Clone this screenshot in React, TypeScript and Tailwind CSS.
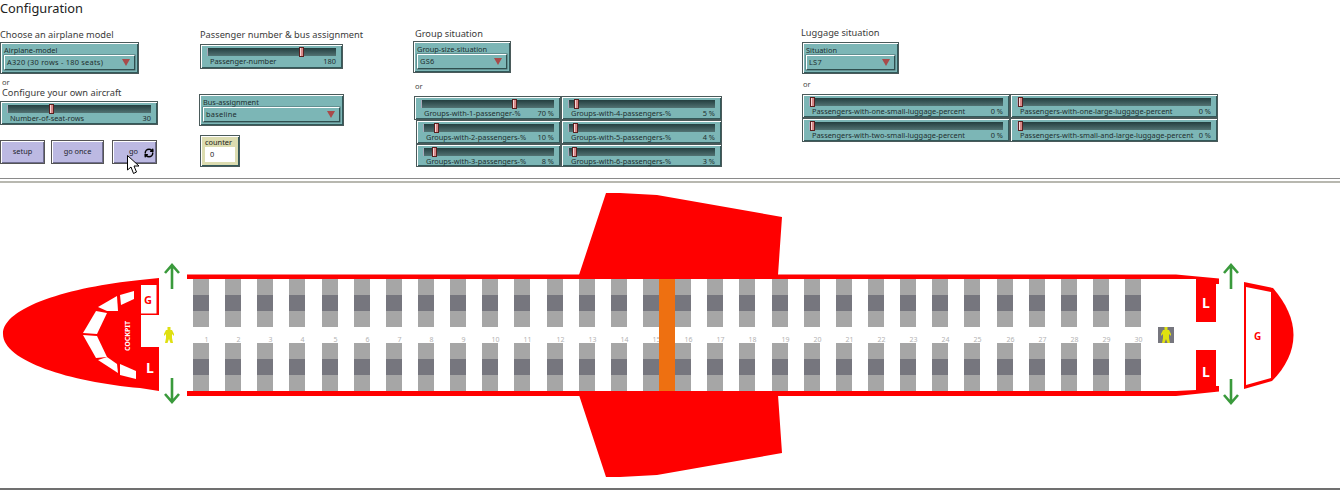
import { RefreshCw } from "lucide-react";

const base = "relative border border-[#4a5a5a] shadow-[inset_1px_1px_0_#ffffff,inset_-1px_-1px_0_#33595a]";

function Chooser({ label, value, className }: { label: string; value: string; className: string }) {
  return (
    <div className={`${base} bg-[#7cb6b6] flex flex-col px-[3px] pt-[2px] pb-[3px] ${className}`}>
      <div className="text-[7.4px] leading-[10px] h-[10px] text-[#1f2f2f] whitespace-nowrap">{label}</div>
      <div className="mt-auto h-[16px] flex items-center justify-between pl-[2px] pr-[4px] border border-[#ffffff] border-r-[#2f4f4f] border-b-[#2f4f4f] shadow-[0_0_0_0.5px_#47696a]">
        <span className="text-[7.4px] tracking-[0.25px] text-[#1f2f2f] whitespace-nowrap">{value}</span>
        <svg width="8" height="7" viewBox="0 0 8 7"><path d="M0 0H8L4 7Z" fill="#a84a4a" /></svg>
      </div>
    </div>
  );
}

function Slider({ label, value, pos, className }: { label: string; value: string; pos: number; className: string }) {
  return (
    <div className={`${base} bg-[#7cb6b6] flex flex-col px-[6px] pt-[3px] shrink-0 ${className}`}>
      <div className="relative h-[8px] bg-gradient-to-b from-[#243f40] to-[#527373] border-l border-l-[#aab] ">
        <div
          className="absolute top-[-1px] w-[5px] h-[10px] bg-[#d98888] border border-[#5a2020] shadow-[inset_1px_0_0_#f6d8d8]"
          style={{ left: pos }}
        />
      </div>
      <div className="flex justify-between pl-[3px] text-[7.4px] leading-[10px] text-[#1f2f2f] whitespace-nowrap">
        <span>{label}</span>
        <span>{value}</span>
      </div>
    </div>
  );
}

function Btn({ children, className }: { children: React.ReactNode; className: string }) {
  return (
    <div className={`flex items-center justify-center h-[24px] bg-[#bcb9e2] border border-[#555] shadow-[inset_1px_1px_0_#ffffff,inset_-1px_-1px_0_#6f6d90] text-[7.4px] text-[#1f1f2f] ${className}`}>
      {children}
    </div>
  );
}

const Heading = ({ children, className = "" }: { children: string; className?: string }) => (
  <div className={`text-[9.25px] leading-[12px] text-[#3a3a3a] whitespace-nowrap ${className}`}>{children}</div>
);
const Or = ({ className = "" }: { className?: string }) => (
  <div className={`text-[7.5px] leading-[10px] text-[#444] ${className}`}>or</div>
);

const Person = ({ x, y }: { x: number; y: number }) => (
  <path
    transform={`translate(${x} ${y})`}
    d="M-1.5 -8H1.5V-5H3L5 -1V1L3 -1V3L4 8H1.5L0 4L-1.5 8H-4L-3 3V-1L-5 1V-1L-3 -5H-1.5Z"
    fill="#dfe010"
  />
);

const UpArrow = ({ x, y }: { x: number; y: number }) => (
  <path
    d={`M${x} ${y + 25}V${y + 1}M${x - 7} ${y + 9}L${x} ${y + 1}L${x + 7} ${y + 9}`}
    stroke="#3a9a3c"
    strokeWidth="2.6"
    fill="none"
  />
);
const DownArrow = ({ x, y }: { x: number; y: number }) => (
  <path
    d={`M${x} ${y}V${y + 24}M${x - 7} ${y + 16}L${x} ${y + 24}L${x + 7} ${y + 16}`}
    stroke="#3a9a3c"
    strokeWidth="2.6"
    fill="none"
  />
);

function Plane() {
  const cols = Array.from({ length: 30 }, (_, i) => i);
  return (
    <svg width="1340" height="305" viewBox="0 184 1340 305" className="block">
      {/* wings */}
      <path d="M579 276L606 194H620L657 196L782 218L778 276V280H579Z" fill="#ff0000" />
      <path d="M579 396L606 478H620L657 476L782 454L778 396V392H579Z" fill="#ff0000" />
      {/* fuselage */}
      <path d="M187 275.5H1176L1219 279.5V285L1196 285V280L1176 280H187Z" fill="#ff0000" />
      <path d="M187 392H1176L1196 391V387H1219V392.5L1176 397H187Z" fill="#ff0000" />
      {/* seats */}
      {cols.map((i) => {
        const x = Math.round(193 + i * 32.14);
        return (
          <g key={i} shapeRendering="crispEdges">
            <rect x={x} y={280} width={16} height={48} fill="#a6a6a6" />
            <rect x={x} y={296} width={16} height={16} fill="#76767e" />
            <rect x={x} y={344} width={16} height={48} fill="#a6a6a6" />
            <rect x={x} y={360} width={16} height={16} fill="#76767e" />
            <text x={x + 13.5} y={342.5} fontSize="7" textAnchor="middle" fill="#b4b4b4">{i + 1}</text>
          </g>
        );
      })}
      <rect x={659} y={280} width={16} height={112} fill="#ee7011" shapeRendering="crispEdges" />
      {/* nose */}
      <path
        d="M159 279L140 281C70 288 3 308 3 335C3 362 70 383 140 389L159 392V348H141V316H159Z"
        fill="#ff0000"
      />
      <path d="M141 285H159V316H141Z" fill="#ff0000" />
      <path d="M141 286H156.5V314.5H141Z" fill="#ffffff" />
      <text x={148} y={305} fontSize="11" fontWeight="700" textAnchor="middle" fill="#ff0000">G</text>
      <text x={150} y={374} fontSize="14" fontWeight="700" textAnchor="middle" fill="#ffffff">L</text>
      <g fill="#ffffff">
        <path d="M83 334L96 312L107 314L97 335Z" />
        <path d="M98 308L117 297L118 312L107 312Z" />
        <path d="M120 296L134 292V300L121 306Z" />
        <path d="M83 336L97 337L107 358L96 359Z" />
        <path d="M98 361L107 358L117 365L118 374Z" />
        <path d="M120 365L136 372V380L120 376Z" />
      </g>
      <text x={0} y={0} fontSize="7" fontWeight="700" textAnchor="middle" fill="#ffffff" transform="translate(129.5 337) rotate(-90)">COCKPIT</text>
      <Person x={169} y={336} />
      {/* rear */}
      <rect x={1196} y={281} width={20} height={42} fill="#ff0000" />
      <rect x={1196} y={351} width={20} height={41} fill="#ff0000" />
      <text x={1206} y={309} fontSize="14" fontWeight="700" textAnchor="middle" fill="#ffffff">L</text>
      <text x={1206} y={378} fontSize="14" fontWeight="700" textAnchor="middle" fill="#ffffff">L</text>
      <rect x={1158} y={328} width={16} height={16} fill="#76767e" shapeRendering="crispEdges" />
      <Person x={1166} y={336} />
      {/* tail */}
      <path d="M1244 283L1273 289C1286 304 1293.5 320 1293.5 336C1293.5 352 1286 368 1272 382L1244 390Z" fill="#ff0000" />
      <path d="M1246 288L1271 293V379L1246 386Z" fill="#ffffff" />
      <text x={1257.5} y={341} fontSize="10" fontWeight="700" textAnchor="middle" fill="#ff0000">G</text>
      <UpArrow x={172} y={265} />
      <DownArrow x={172} y={379} />
      <UpArrow x={1231} y={265} />
      <DownArrow x={1231} y={380} />
    </svg>
  );
}

export default function App() {
  return (
    <div className="relative w-[1340px] h-[496px] bg-white overflow-hidden font-['Noto_Sans',sans-serif]">
      <div className="h-[178px] flex flex-col">
        <div className="h-[29px] text-[12.8px] leading-[17px] text-[#222]">Configuration</div>
        <div className="flex">
          {/* column 1 */}
          <div className="w-[199px] flex flex-col">
            <Heading>Choose an airplane model</Heading>
            <Chooser label="Airplane-model" value="A320 (30 rows - 180 seats)" className="w-[139px] h-[32px] mt-[1px]" />
            <Or className="ml-[2px] mt-[3px]" />
            <Heading className="ml-[2px]">Configure your own aircraft</Heading>
            <Slider label="Number-of-seat-rows" value="30" pos={41} className="w-[158px] h-[24px] mt-[2px]" />
            <div className="flex mt-[15px]">
              <Btn className="w-[45px]">setup</Btn>
              <Btn className="w-[53px] ml-[6px]">go once</Btn>
              <Btn className="w-[45px] ml-[8px] relative">
                <span className="mr-[2px]">go</span>
                <RefreshCw size={10} strokeWidth={3.5} color="#000" className="absolute right-[2px] top-[7px]" />
              </Btn>
            </div>
          </div>
          {/* column 2 */}
          <div className="w-[214px] flex flex-col">
            <Heading className="ml-[1px]">Passenger number &amp; bus assignment</Heading>
            <Slider label="Passenger-number" value="180" pos={91} className="w-[143px] h-[25px] ml-[1px] mt-[3px]" />
            <Chooser label="Bus-assignment" value="baseline" className="w-[145px] h-[32px] mt-[25px]" />
            <div className={`${base} ml-[1px] mt-[9px] w-[40px] h-[32px] bg-[#dcdcb0] px-[4px] pt-[1px]`}>
              <div className="text-[7.4px] leading-[10px] text-[#222]">counter</div>
              <div className="h-[15px] bg-white text-[7.4px] leading-[15px] pl-[5px] text-[#222]">0</div>
            </div>
          </div>
          {/* column 3 */}
          <div className="w-[388px] flex flex-col">
            <Heading className="ml-[2px] mt-[-1px]">Group situation</Heading>
            <Chooser label="Group-size-situation" value="GS6" className="w-[98px] h-[32px] mt-[1px]" />
            <Or className="ml-[2px] mt-[8px]" />
            <div className="flex mt-[5px] ml-[1px]">
              <div className="flex flex-col w-[147px]">
                <Slider label="Groups-with-1-passenger-%" value="70 %" pos={90} className="w-[147px] h-[24px]" />
                <Slider label="Groups-with-2-passengers-%" value="10 %" pos={10} className="w-[145px] h-[24px] ml-[2px]" />
                <Slider label="Groups-with-3-passengers-%" value="8 %" pos={8} className="w-[145px] h-[23px] ml-[2px]" />
              </div>
              <div className="flex flex-col w-[161px]">
                <Slider label="Groups-with-4-passengers-%" value="5 %" pos={5} className="w-[161px] h-[24px]" />
                <Slider label="Groups-with-5-passengers-%" value="4 %" pos={4} className="w-[161px] h-[24px]" />
                <Slider label="Groups-with-6-passengers-%" value="3 %" pos={3} className="w-[161px] h-[23px]" />
              </div>
            </div>
          </div>
          {/* column 4 */}
          <div className="flex flex-col">
            <Heading className="mt-[-2px]">Luggage situation</Heading>
            <Chooser label="Situation" value="LS7" className="w-[97px] h-[32px] mt-[3px] ml-[1px]" />
            <Or className="ml-[2px] mt-[5px]" />
            <div className="flex mt-[5px] ml-[1px]">
              <div className="flex flex-col">
                <Slider label="Passengers-with-one-small-luggage-percent" value="0 %" pos={0} className="w-[208px] h-[24px]" />
                <Slider label="Passengers-with-two-small-luggage-percent" value="0 %" pos={0} className="w-[208px] h-[24px]" />
              </div>
              <div className="flex flex-col">
                <Slider label="Passengers-with-one-large-luggage-percent" value="0 %" pos={0} className="w-[208px] h-[24px]" />
                <Slider label="Passengers-with-small-and-large-luggage-percent" value="0 %" pos={0} className="w-[208px] h-[24px]" />
              </div>
            </div>
          </div>
        </div>
      </div>
      <div className="h-[1px] bg-[#8a8a8a]" />
      <div className="h-[2px] mt-[2px] bg-[#b8b8b0]" />
      <Plane />
      <div className="h-[2px] bg-[#707070]" />
      <svg className="absolute left-[127px] top-[155px]" width="14" height="20" viewBox="0 0 14 20">
        <path d="M0.5 0.5V15L4 12L6.5 18.5L9.5 17L7 11H12Z" fill="#ffffff" stroke="#000000" strokeWidth="1" />
      </svg>
    </div>
  );
}
